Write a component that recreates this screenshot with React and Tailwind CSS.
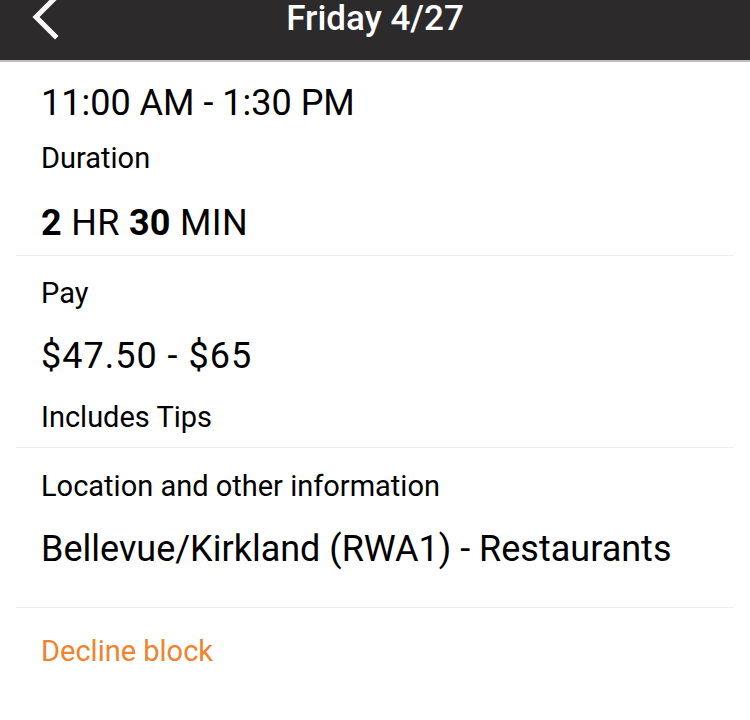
export default function App() {
  const font = { fontFamily: "Roboto, 'Liberation Sans', sans-serif" };
  return (
    <div className="w-[750px] h-[720px] bg-white overflow-hidden" style={font}>
      <div className="relative h-[62px] bg-[#2c2a2b] border-b-2 border-[#bdbdbd] flex justify-center">
        <svg className="absolute left-[28px] top-[-4px]" width="34" height="44" viewBox="0 0 34 44">
          <polyline points="27,2 8,21 27,40" fill="none" stroke="#fff" strokeWidth="5" strokeLinecap="square" strokeLinejoin="miter" />
        </svg>
        <div className="text-white text-[35px] leading-[38px] font-medium">Friday 4/27</div>
      </div>
      <div className="px-[16px]">
        <div className="px-[25px] pt-[23px] pb-[14px] border-b border-[#efefef] text-black">
          <div className="text-[36px] leading-[36px]">11:00 AM - 1:30 PM</div>
          <div className="text-[29px] leading-[27px] mt-[24px]">Duration</div>
          <div className="text-[36px] leading-[36px] mt-[33px] tracking-[0.3px]">
            <span className="font-bold">2</span> HR <span className="font-bold">30</span> MIN
          </div>
        </div>
        <div className="px-[25px] pt-[24px] pb-[16px] border-b border-[#efefef] text-black">
          <div className="text-[29px] leading-[27px]">Pay</div>
          <div className="text-[36px] leading-[36px] mt-[31px] tracking-[1px]">$47.50 - $65</div>
          <div className="text-[29px] leading-[27px] mt-[30px]">Includes Tips</div>
        </div>
        <div className="px-[25px] pt-[25px] pb-[40px] border-b border-[#efefef] text-black">
          <div className="text-[29px] leading-[27px]">Location and other information</div>
          <div className="text-[36px] leading-[36px] mt-[31px]">Bellevue/Kirkland (RWA1) - Restaurants</div>
        </div>
        <div className="px-[25px] pt-[30px]">
          <div className="text-[29px] leading-[27px] text-[#f0832d]">Decline block</div>
        </div>
      </div>
    </div>
  );
}
